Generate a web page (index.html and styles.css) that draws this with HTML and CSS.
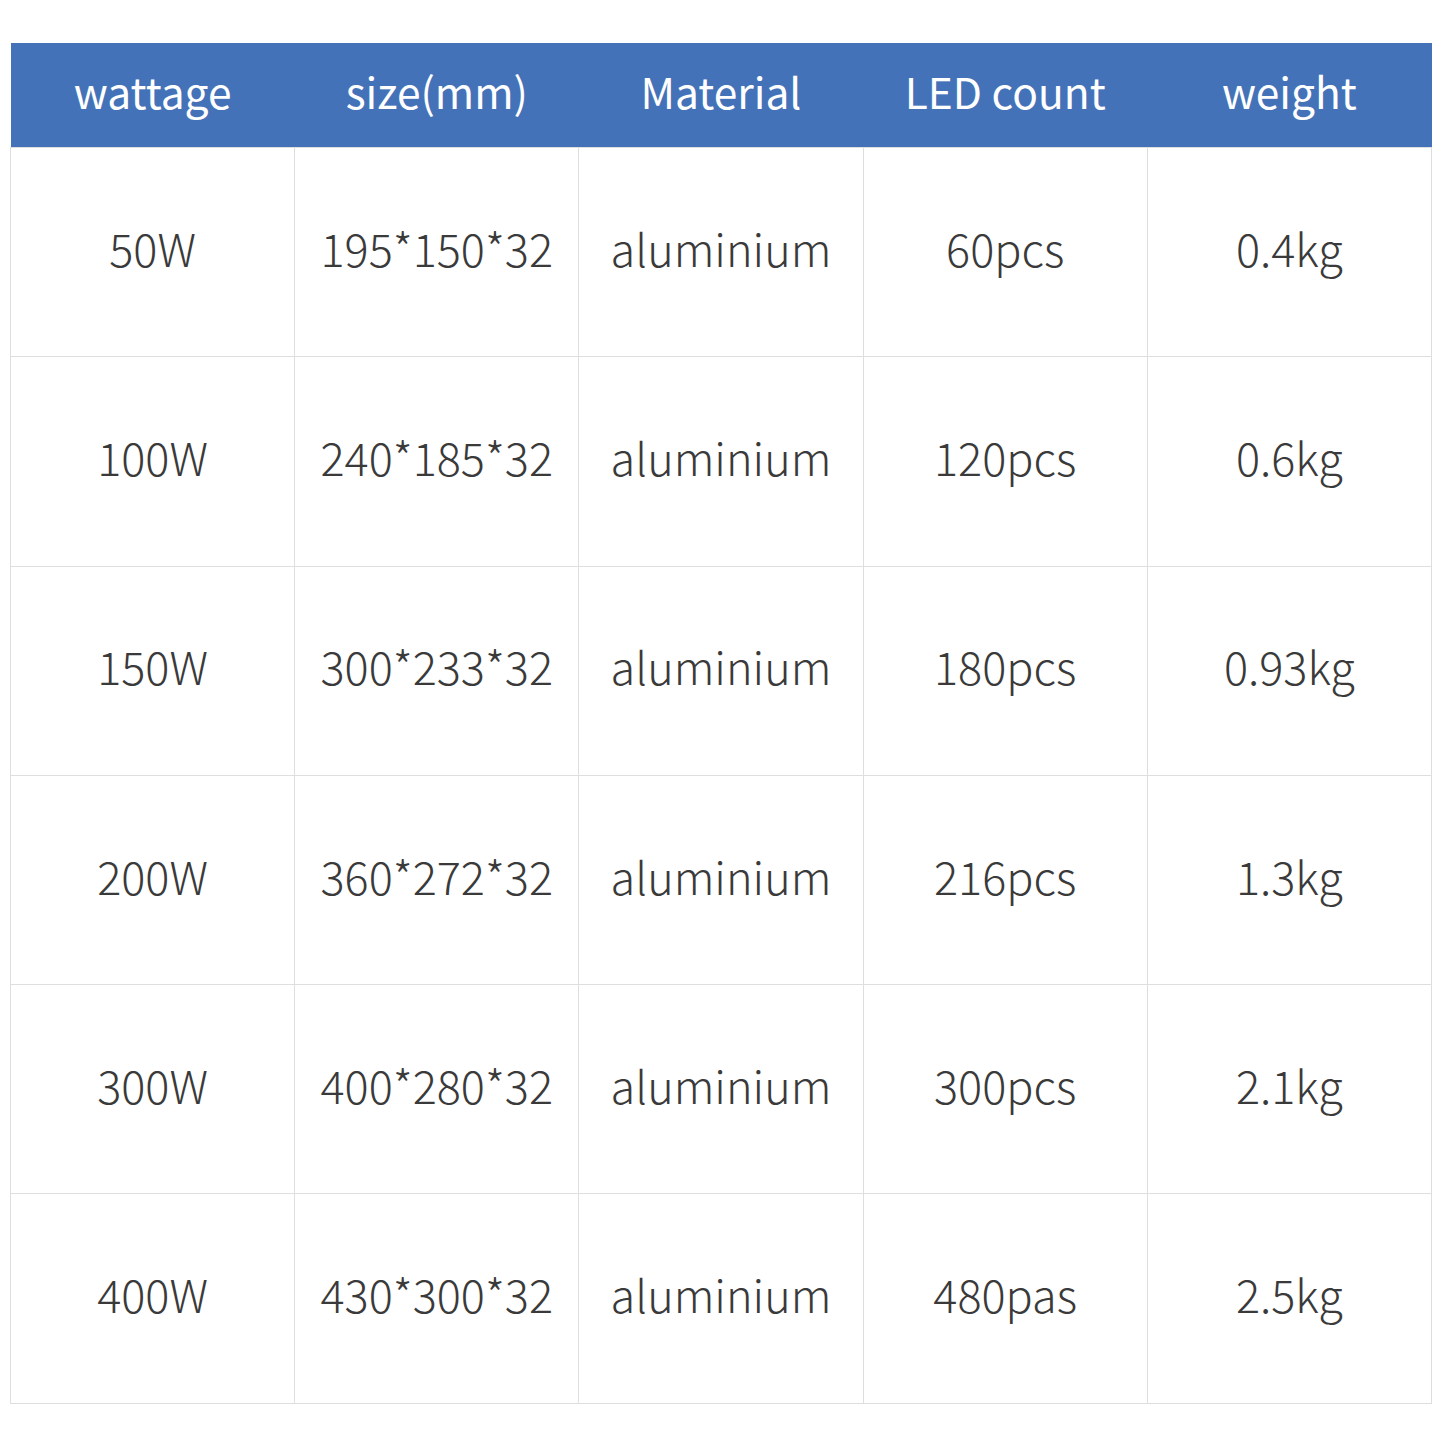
FILE: index.html
```html
<!DOCTYPE html>
<html>
<head>
<meta charset="utf-8">
<link rel="stylesheet" href="styles.css">
</head>
<body>
<table class="spec">
  <thead>
    <tr><th>wattage</th><th>size(mm)</th><th>Material</th><th>LED count</th><th>weight</th></tr>
  </thead>
  <tbody>
    <tr><td>50W</td><td>195*150*32</td><td>aluminium</td><td>60pcs</td><td>0.4kg</td></tr>
    <tr><td>100W</td><td>240*185*32</td><td>aluminium</td><td>120pcs</td><td>0.6kg</td></tr>
    <tr><td>150W</td><td>300*233*32</td><td>aluminium</td><td>180pcs</td><td>0.93kg</td></tr>
    <tr><td>200W</td><td>360*272*32</td><td>aluminium</td><td>216pcs</td><td>1.3kg</td></tr>
    <tr><td>300W</td><td>400*280*32</td><td>aluminium</td><td>300pcs</td><td>2.1kg</td></tr>
    <tr><td>400W</td><td>430*300*32</td><td>aluminium</td><td>480pas</td><td>2.5kg</td></tr>
  </tbody>
</table>
</body>
</html>
```
FILE: styles.css
```css
html, body {
  margin: 0;
  padding: 0;
  background: #ffffff;
}
body {
  padding: 43px 8px 0 10px;
  font-family: "Noto Sans CJK SC", "Noto Sans", sans-serif;
}
.spec {
  width: 1422px;
  border-collapse: collapse;
  table-layout: fixed;
}
.spec th {
  background: #4472b8;
  color: #ffffff;
  font-weight: 400;
  font-size: 42.5px;
  height: 94px;
  padding: 0 0 10px 0;
  text-align: center;
  vertical-align: middle;
}
.spec td {
  border: 1.5px solid #dedede;
  color: #3a3a3a;
  font-weight: 300;
  font-size: 45px;
  height: 198.3px;
  padding: 0 0 10px 0;
  text-align: center;
  vertical-align: middle;
}
```
